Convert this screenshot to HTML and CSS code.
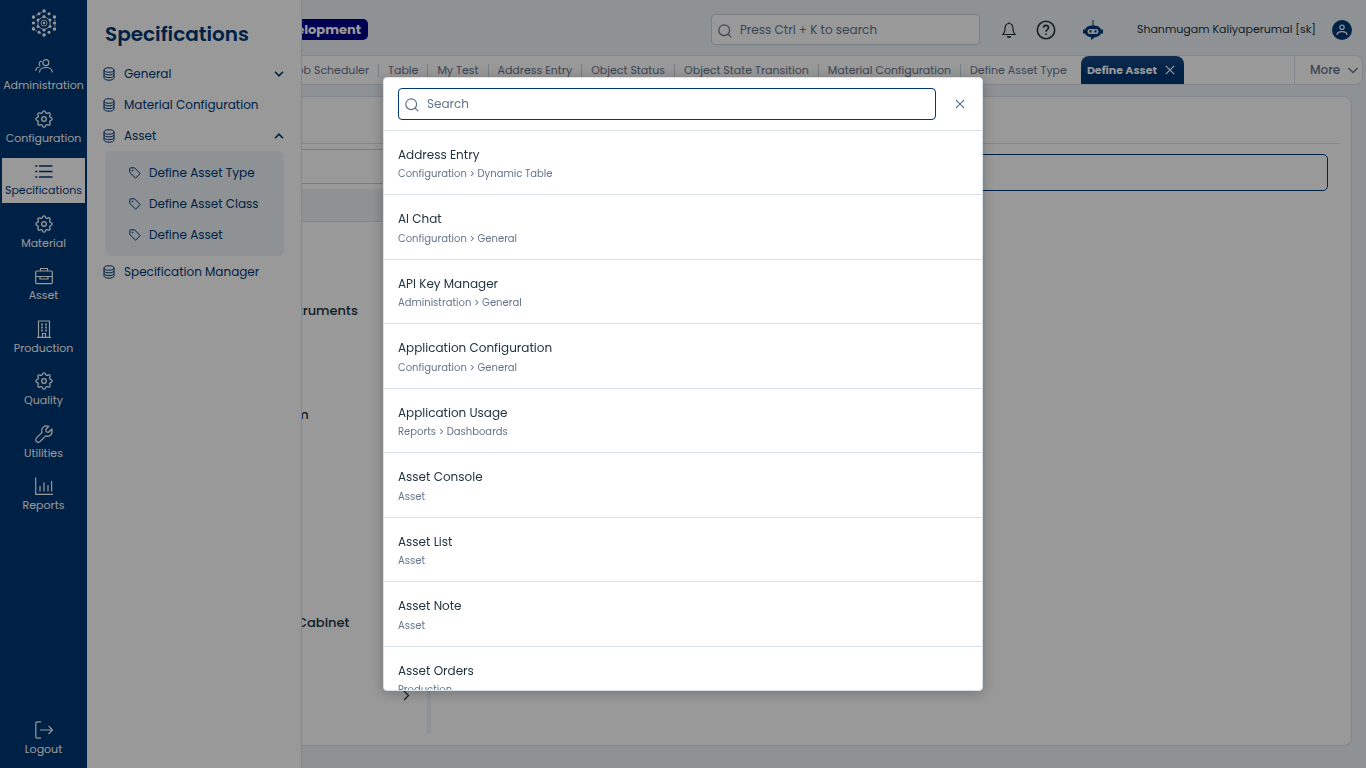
FILE: index.html
```html
<!DOCTYPE html>
<html lang="en">
<head>
<meta charset="utf-8">
<title>Define Asset</title>
<link rel="stylesheet" href="styles.css">
</head>
<body>
<svg class="sprite" aria-hidden="true">
  <symbol id="i-gear" viewBox="-.3 -.3 16.6 16.6"><path d="M9.300 1.480c-.390-1.310-2.210-1.310-2.600 0l-.1.340a1.370 1.370 0 0 1-1.970.820l-.310-.170c-1.200-.650-2.500.650-1.850 1.850l.170.310a1.370 1.370 0 0 1-.820 1.970l-.340.100c-1.310.390-1.310 2.210 0 2.600l.340.100a1.370 1.370 0 0 1 .820 1.970l-.170.310c-.650 1.200.650 2.500 1.850 1.850l.310-.170a1.370 1.370 0 0 1 1.970.820l.100.340c.390 1.310 2.210 1.310 2.600 0l.100-.340a1.370 1.370 0 0 1 1.970-.820l.310.170c1.200.650 2.500-.650 1.850-1.850l-.170-.310a1.370 1.370 0 0 1 .820-1.970l.340-.100c1.310-.390 1.310-2.210 0-2.600l-.340-.100a1.370 1.370 0 0 1-.820-1.970l.170-.310c.650-1.200-.650-2.500-1.850-1.850l-.310.170a1.370 1.370 0 0 1-1.970-.820Z"/><circle cx="8" cy="8" r="2.100"/></symbol>
  <symbol id="i-db" viewBox="0 0 12 14"><ellipse cx="6" cy="3" rx="5" ry="2.200"/><path d="M1 3v8c0 1.200 2.200 2.200 5 2.200s5-1 5-2.200V3M1 5.700c0 1.200 2.200 2.200 5 2.200s5-1 5-2.200M1 8.400c0 1.200 2.200 2.200 5 2.200s5-1 5-2.200"/></symbol>
  <symbol id="i-tag" viewBox="0 0 12 12"><path d="M.8 1.500V5.500L6.600 11.200 11.200 6.600 5.500.8H1.500Q.8.800.8 1.500Z"/><circle cx="3.500" cy="3.500" r=".4"/></symbol>
  <symbol id="i-search" viewBox="0 0 14 14"><circle cx="6.200" cy="6.200" r="5.400"/><path d="M10 10l3.300 3.300"/></symbol>
  <symbol id="i-x" viewBox="0 0 10 10"><path d="M.8.800l8.400 8.400M9.200.800L.8 9.200"/></symbol>
  <symbol id="i-down" viewBox="0 0 10 6"><path d="M1 .8l4 4 4-4"/></symbol>
</svg>

<div class="app">
  <nav class="rail" aria-label="Main">
    <a class="logo" href="#" aria-label="Home">
      <svg width="26" height="28" viewBox="0 0 26 28"><g fill="none" stroke="currentColor" stroke-width=".8"><path d="M13 2 24 8v12L13 26 2 20V8Z" stroke-dasharray="2 3"/><path d="M13 7.500 19 11v6.500L13 21 7 17.500V11Z"/><circle cx="13" cy="14" r="3"/></g><g fill="currentColor"><circle cx="13" cy="2" r="1.700"/><circle cx="8" cy="4.700" r="1.500"/><circle cx="18" cy="4.700" r="1.500"/><circle cx="2.500" cy="8" r="1.700"/><circle cx="23.500" cy="8" r="1.700"/><circle cx="2.500" cy="14" r="1.600"/><circle cx="23.500" cy="14" r="1.600"/><circle cx="2.500" cy="20" r="1.700"/><circle cx="23.500" cy="20" r="1.700"/><circle cx="8" cy="23.300" r="1.500"/><circle cx="18" cy="23.300" r="1.500"/><circle cx="13" cy="26" r="1.700"/><circle cx="13" cy="7.500" r="1.600"/><circle cx="7" cy="11" r="1.500"/><circle cx="19" cy="11" r="1.500"/><circle cx="7" cy="17.500" r="1.500"/><circle cx="19" cy="17.500" r="1.500"/><circle cx="13" cy="21" r="1.600"/><circle cx="13" cy="14" r="1.300"/></g></svg>
    </a>
    <div class="rail-list">
      <a class="rail-item" href="#"><svg class="ico" width="18" height="18" viewBox="0 0 18 18"><circle cx="10.800" cy="5.700" r="3"/><path d="M4.500 15.500c0-6.700 12.800-6.700 12.800 0M6.800 4.500C4.500 3.800 3 7.500 5.300 8.700M.8 14c0-2.500 1.400-3.800 3.700-4"/></svg>Administration</a>
      <a class="rail-item" href="#"><svg class="ico" width="18" height="18"><use href="#i-gear"/></svg>Configuration</a>
      <a class="rail-item rail-item-on" href="#"><svg class="ico" width="18" height="18" viewBox="0 0 18 18"><path d="M4 4h13.500M4 9.500h13.500M4 15h13.500M.3 4h2M.3 9.500h2M.3 15h2" stroke-width="1.600"/></svg>Specifications</a>
      <a class="rail-item" href="#"><svg class="ico" width="18" height="18"><use href="#i-gear"/></svg>Material</a>
      <a class="rail-item" href="#"><svg class="ico" width="18" height="18" viewBox="0 0 18 18"><rect x=".7" y="4" width="16.600" height="12.600" rx="1"/><path d="M5.500 4V1.500h7V4M.7 9.500H5v2.500h8V9.500h4.300M5 9.500h8"/></svg>Asset</a>
      <a class="rail-item" href="#"><svg class="ico" width="18" height="18" viewBox="0 0 18 18"><path d="M3.500 17V1h11v16M2 17.300h14M7.500 17v-3.500h3V17"/><path d="M6.200 4.500h1.600M10.200 4.500h1.600M6.200 7.500h1.600M10.200 7.500h1.600M6.200 10.500h1.600M10.200 10.500h1.600" stroke-width="1.800"/></svg>Production</a>
      <a class="rail-item" href="#"><svg class="ico" width="18" height="18"><use href="#i-gear"/></svg>Quality</a>
      <a class="rail-item" href="#"><svg class="ico" width="18" height="18" viewBox="0 0 18 18"><path d="M13.800 1.200C9.500-.2 5.500 3 7.100 7.300L1.300 13.200C-.5 15.500 2.500 18.500 4.800 16.700L10.700 10.900C15 12.500 18.200 8.500 16.800 4.200L13.500 7.300 11.200 6.800 10.700 4.500Z"/></svg>Utilities</a>
      <a class="rail-item" href="#"><svg class="ico" width="18" height="18" viewBox="0 0 18 18"><path d="M.7.500v16.800H18M5 14.500V9M9 14.500V5.500M13 14.500V8M16.600 14.500V4"/></svg>Reports</a>
    </div>
    <a class="rail-item rail-out" href="#"><svg class="ico" width="18" height="18" viewBox="0 0 18 18"><path d="M6 .8H2.500Q.8.800.8 2.500v13Q.8 17.200 2.500 17.200H6M5 9h12M13.500 4.800 17.500 9l-4 4.200"/></svg>Logout</a>
  </nav>

  <aside class="panel">
    <h1 class="panel-title">Specifications</h1>
    <a class="menu" href="#"><svg class="ico" width="12" height="14"><use href="#i-db"/></svg><span>General</span><svg class="ico caret" width="10" height="6"><use href="#i-down"/></svg></a>
    <a class="menu" href="#"><svg class="ico" width="12" height="14"><use href="#i-db"/></svg><span>Material Configuration</span></a>
    <a class="menu" href="#"><svg class="ico" width="12" height="14"><use href="#i-db"/></svg><span>Asset</span><svg class="ico caret caret-up" width="10" height="6"><use href="#i-down"/></svg></a>
    <div class="submenu">
      <a class="menu" href="#"><svg class="ico" width="12" height="12"><use href="#i-tag"/></svg><span>Define Asset Type</span></a>
      <a class="menu" href="#"><svg class="ico" width="12" height="12"><use href="#i-tag"/></svg><span>Define Asset Class</span></a>
      <a class="menu" href="#"><svg class="ico" width="12" height="12"><use href="#i-tag"/></svg><span>Define Asset</span></a>
    </div>
    <a class="menu" href="#"><svg class="ico" width="12" height="14"><use href="#i-db"/></svg><span>Specification Manager</span></a>
  </aside>

  <main class="main">
    <header class="top">
      <div class="env"><span class="badge">Development</span></div>
      <label class="search top-search"><svg class="ico" width="14" height="14"><use href="#i-search"/></svg><input type="text" placeholder="Press Ctrl + K to search" aria-label="Search pages"></label>
      <button class="icon-btn" aria-label="Notifications"><svg class="ico" width="14" height="16" viewBox="0 0 14 16"><path d="M7 1.500C3.500 1.500 3 4.500 3 7c0 3-1 4.500-2 5.500h12c-1-1-2-2.500-2-5.500 0-2.500-.5-5.500-4-5.500ZM7 .3v1.200"/><path d="M5.300 14.200Q7 16.200 8.700 14.200" stroke-width="1.600"/></svg></button>
      <button class="icon-btn" aria-label="Help"><svg class="ico" width="20" height="20" viewBox="0 0 20 20"><g stroke-width="1.600"><circle cx="10" cy="10" r="8.700"/><path d="M7.500 7.800c0-3.200 5-3.200 5 0 0 1.900-2.500 1.800-2.500 4M10 13.500v1.600"/></g></svg></button>
      <button class="icon-btn bot" aria-label="Assistant"><svg width="20" height="20" viewBox="0 0 20 20"><path fill="currentColor" fill-rule="evenodd" d="M9.500 0h1v5.500c4 0 6.500 1.300 7.500 4h2v4h-2c-1 2-3 3.500-6 3.700L8 20v-2.800C5 17 3 15.500 2 13.500H0v-4h2c1-2.700 3.500-4 7.500-4ZM6.500 9Q4.500 9 4.500 11.500T6.500 14h7q2 0 2-2.500T13.500 9Z"/><path fill="currentColor" d="M6.500 10.300h2v2.300h-2zM11.500 10.300h2v2.300h-2z"/></svg></button>
      <span class="user">Shanmugam Kaliyaperumal [sk]</span>
      <button class="avatar" aria-label="Account"><svg class="ico" width="12" height="12" viewBox="0 0 12 12"><circle cx="6" cy="3.200" r="2.200"/><path d="M1 11c0-4.500 10-4.500 10 0"/></svg></button>
    </header>

    <div class="tabbar">
      <div class="tabs">
        <a class="tab" href="#">Job Scheduler</a><a class="tab" href="#">Table</a><a class="tab" href="#">My Test</a><a class="tab" href="#">Address Entry</a><a class="tab" href="#">Object Status</a><a class="tab" href="#">Object State Transition</a><a class="tab" href="#">Material Configuration</a><a class="tab tab-last" href="#">Define Asset Type</a>
        <a class="tab-on" href="#">Define Asset <svg class="ico" width="10" height="10"><use href="#i-x"/></svg></a>
      </div>
      <button class="more">More <svg class="ico" width="12" height="7"><use href="#i-down"/></svg></button>
    </div>

    <section class="card">
      <div class="card-head"></div>
      <div class="split">
        <div class="tree">
          <input class="tree-filter" type="text" aria-label="Filter">
          <div class="tree-head"></div>
          <ul class="tree-list">
            <li>Instruments</li>
            <li class="row3">Item</li>
            <li class="row7">Cabinet</li>
          </ul>
          <button class="next" aria-label="Next"><svg class="ico" width="7" height="11" viewBox="0 0 7 11"><path d="M1 1l4.500 4.500L1 10"/></svg></button>
        </div>
        <div class="detail"><input class="detail-input" type="text" aria-label="Asset"></div>
      </div>
    </section>
  </main>
</div>

<div class="overlay">
  <div class="dialog" role="dialog" aria-label="Search">
    <div class="dialog-head">
      <label class="search dialog-search"><svg class="ico" width="14" height="14"><use href="#i-search"/></svg><input type="text" placeholder="Search" aria-label="Search"></label>
      <button class="close" aria-label="Close"><svg class="ico" width="10" height="10"><use href="#i-x"/></svg></button>
    </div>
    <div class="results">
      <a class="result" href="#"><span class="name">Address Entry</span><span class="path">Configuration &gt; Dynamic Table</span></a>
      <a class="result" href="#"><span class="name">AI Chat</span><span class="path">Configuration &gt; General</span></a>
      <a class="result" href="#"><span class="name">API Key Manager</span><span class="path">Administration &gt; General</span></a>
      <a class="result" href="#"><span class="name">Application Configuration</span><span class="path">Configuration &gt; General</span></a>
      <a class="result" href="#"><span class="name">Application Usage</span><span class="path">Reports &gt; Dashboards</span></a>
      <a class="result" href="#"><span class="name">Asset Console</span><span class="path">Asset</span></a>
      <a class="result" href="#"><span class="name">Asset List</span><span class="path">Asset</span></a>
      <a class="result" href="#"><span class="name">Asset Note</span><span class="path">Asset</span></a>
      <a class="result" href="#"><span class="name">Asset Orders</span><span class="path">Production</span></a>
    </div>
  </div>
</div>
</body>
</html>
```
FILE: styles.css
```css
* { box-sizing: border-box; }
body {
  margin: 0;
  font-family: Poppins, Inter, "Open Sans", sans-serif;
  font-size: 12px;
  color: #22343f;
  background: #edf3f7;
  overflow: hidden;
}
a { color: inherit; text-decoration: none; }
button { font: inherit; color: inherit; border: 0; padding: 0; background: none; cursor: pointer; }
input { font: inherit; outline: 0; }
.sprite { display: none; }
.ico { fill: none; stroke: currentColor; stroke-width: 1.2; flex: none; overflow: visible; }

.app { position: relative; display: flex; height: 100vh; }

/* Icon rail */
.rail {
  flex: 0 0 87px;
  min-width: 0;
  display: flex;
  flex-direction: column;
  padding: 9px 2px 6px;
  background: #003775;
  color: #fff;
}
.logo { align-self: center; height: 28px; }
.rail-list {
  min-height: 465px;
  margin-top: 16px;
  display: flex;
  flex-direction: column;
  justify-content: space-between;
}
.rail-item {
  height: 45px;
  display: flex;
  flex-direction: column;
  align-items: center;
  justify-content: center;
  gap: 2px;
  font-size: 11px;
  line-height: 17px;
  white-space: nowrap;
}
.rail-item-on { background: #fff; color: #003775; }
.rail-out { margin-top: auto; }

/* Section panel */
.panel {
  position: absolute;
  z-index: 1;
  top: 0;
  bottom: 0;
  left: 87px;
  width: 215px;
  padding: 18px 17px 0 16px;
  background: #fff;
  border-right: 1px solid #d7e2eb;
  color: #003775;
}
.panel-title { margin: 0 0 8px 2px; font-size: 20px; line-height: 32px; font-weight: 600; }
.menu { display: flex; align-items: center; gap: 9px; height: 31px; }
.menu .ico { stroke-width: 1; }
.menu .caret { margin-left: auto; stroke-width: 1.6; }
.caret-up { transform: rotate(180deg); }
.submenu { margin: 0 0 0 2px; padding: 6px 0 6px 24px; background: #edf3f7; border-radius: 6px; }
.submenu .menu { gap: 8px; }

/* Top bar */
.main { flex: 1; min-width: 0; display: flex; flex-direction: column; }
.top { height: 55px; display: flex; align-items: center; padding: 4px 14px 0 0; }
.env { width: 281px; margin-right: auto; display: flex; justify-content: flex-end; }
.badge {
  padding: 0 7px;
  font-size: 13px;
  line-height: 21px;
  font-weight: 700;
  color: #fff;
  background: #00008b;
  border-radius: 5px;
}
.search {
  display: flex;
  align-items: center;
  gap: 8px;
  padding: 0 6px;
  background: #fff;
  border: 1px solid #c9d5e0;
  border-radius: 4px;
  color: #64748b;
}
.search .ico { margin-top: 3px; }
.search input { flex: 1; min-width: 0; border: 0; padding: 0; background: none; }
.search input::placeholder { color: #64748b; opacity: 1; }
.top-search { width: 269px; height: 31px; margin-right: 22px; }
.icon-btn { display: flex; margin-right: 20px; }
.bot { margin: 0 34px 0 7px; color: #003775; }
.user { font-size: 11px; }
.avatar {
  width: 20px;
  height: 20px;
  margin-left: 16px;
  display: grid;
  place-items: center;
  border-radius: 50%;
  color: #fff;
  background: #003775;
}

/* Open pages */
.tabbar {
  height: 30px;
  margin-right: 3px;
  display: flex;
  background: #fff;
  border: 1px solid #d7e2eb;
  border-radius: 0 8px 8px 0;
  color: #64748b;
}
.tabs { flex: 1; min-width: 0; display: flex; justify-content: flex-end; align-items: center; padding-right: 110px; font-size: 11px; white-space: nowrap; }
.tab { padding: 0 9px; line-height: 13px; border-right: 1px solid #c9d5e0; }
.tab-last { border-right: 0; padding-right: 14px; }
.tab-on {
  height: 28px;
  padding: 0 9px 0 6px;
  display: flex;
  align-items: center;
  gap: 8px;
  font-weight: 700;
  color: #fff;
  background: linear-gradient(#174a85, #003775 60%);
  border-radius: 8px 8px 0 0;
}
.more {
  width: 68px;
  padding: 0 3px 0 15px;
  display: flex;
  align-items: center;
  justify-content: space-between;
  border-left: 1px solid #d7e2eb;
  font-weight: 500;
}

/* Work area */
.card {
  flex: 1;
  min-height: 0;
  margin: 11px 14px 22px 12px;
  padding: 0 11px 12px;
  display: flex;
  flex-direction: column;
  background: #fff;
  border: 1px solid #d7e2eb;
  border-radius: 8px;
}
.card-head { height: 47px; border-bottom: 1px solid #d7e2eb; }
.split { flex: 1; min-height: 0; display: flex; gap: 14px; }
.tree { width: 320px; padding-top: 5px; display: flex; flex-direction: column; border-right: 4px solid #edf3f7; }
.tree-filter { height: 35px; width: 100%; border: 1px solid #c5cde0; border-radius: 4px; }
.tree-head { height: 33px; margin-top: 5px; background: #edf3f7; border-bottom: 1px solid #d7e2eb; }
.tree-list {
  margin: 0;
  padding: 63px 0 0 168px;
  list-style: none;
  display: grid;
  grid-auto-rows: 52px;
  align-items: center;
  font-size: 13px;
  font-weight: 500;
}
.row3 { grid-row: 3; }
.row7 { grid-row: 7; padding-left: 18px; }
.next { align-self: flex-end; display: flex; margin: auto 17px 32px 0; }
.detail { flex: 1; padding: 10px 12px 0 0; }
.detail-input { width: 100%; height: 37px; border: 1px solid #003775; border-radius: 5px; }

/* Search dialog */
.overlay {
  position: fixed;
  z-index: 2;
  inset: 0;
  display: grid;
  place-items: center;
  background: rgba(0, 0, 0, .4);
}
.dialog {
  width: 600px;
  max-width: 90vw;
  height: 80vh;
  display: flex;
  flex-direction: column;
  overflow: hidden;
  background: #fff;
  border: 1px solid #d7e2eb;
  border-radius: 4px;
  box-shadow: 0 2px 14px rgba(0, 0, 0, .25);
}
.dialog-head { flex: none; display: flex; align-items: center; gap: 16px; padding: 10px 14px; border-bottom: 1px solid #d7e2eb; }
.dialog-search { flex: 1; height: 32px; border-color: #003775; }
.close { width: 16px; height: 16px; display: grid; place-items: center; color: #5a7296; }
.results { flex: 1; min-height: 0; overflow: hidden; }
.result { display: flex; flex-direction: column; gap: 2px; padding: 14px 14px 12px; border-bottom: 1px solid #d7e2eb; line-height: 1.625; }
.path { font-size: 10px; line-height: 1.6; color: #64748b; }
```
